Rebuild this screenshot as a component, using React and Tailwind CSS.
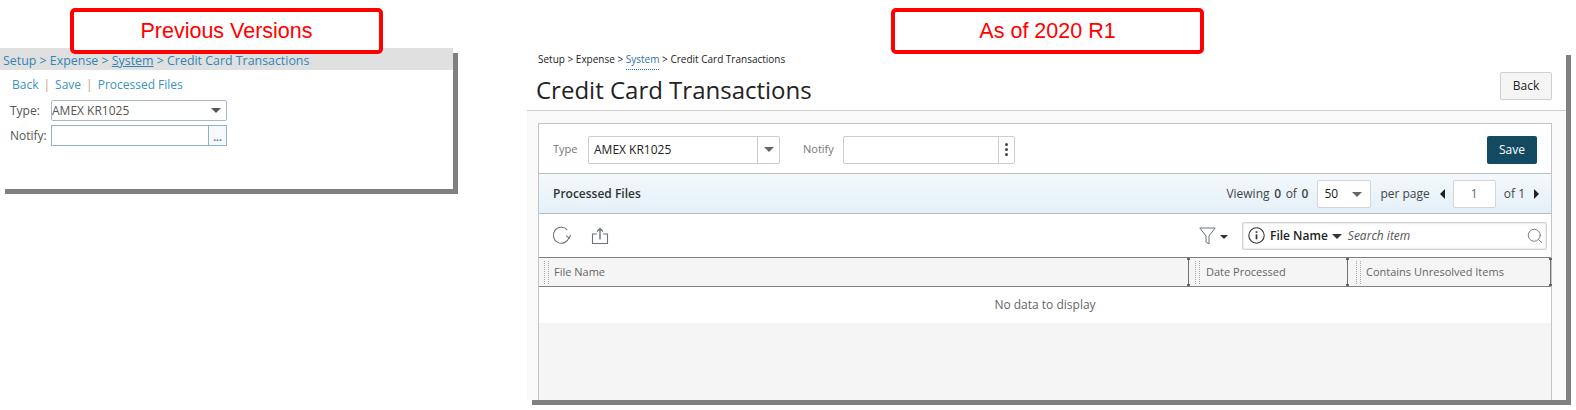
import React from 'react';
import { Search } from 'lucide-react';

const Caret = ({ className = 'border-t-[#666]' }) => (
  <span className={`inline-block w-0 h-0 border-x-[5px] border-x-transparent border-t-[5px] ${className}`} />
);

// Red annotation box sitting over the screenshots
function Callout({ className, children }) {
  return (
    <div className={`absolute top-2 z-10 w-[313px] h-[46px] border-[4px] border-[#ff0000] rounded-[5px] bg-white flex items-center justify-center text-[#ff0000] text-[21.5px] font-['Liberation_Sans',sans-serif] ${className}`}>
      {children}
    </div>
  );
}

function OldPanel() {
  const link = 'text-[#3a93c4]';
  return (
    <div className="w-[453px] h-[141px] bg-white shadow-[5px_5px_0_#808080] text-[12px]">
      <div className="h-[22px] bg-[#e0e0e0] pl-[3px] pt-[2px] text-[#2f86b5] text-[12.4px] font-medium leading-[22px] whitespace-pre">
        Setup &gt; Expense &gt; <span className="underline">System</span> &gt; Credit Card Transactions
      </div>
      <div className="flex items-center h-[22px] mt-1 pl-3 text-[#3a93c4] leading-[22px]">
        <span className={link}>Back</span>
        <span className="mx-[5px] text-[#c9a27c]">|</span>
        <span className={link}>Save</span>
        <span className="mx-[5px] text-[#c9a27c]">|</span>
        <span className={link}>Processed Files</span>
      </div>
      <div className="flex items-center mt-1 pl-[10px] text-[#555]">
        <span className="w-[41px]">Type:</span>
        <div className="w-[176px] h-[21px] border border-[#a9b8c4] rounded-[2px] flex items-center justify-between pr-[5px] text-[#555]">
          <span>AMEX KR1025</span>
          <Caret className="border-t-[#555]" />
        </div>
      </div>
      <div className="flex items-center mt-1 pl-[10px] text-[#555]">
        <span className="w-[41px]">Notify:</span>
        <div className="w-[176px] h-[21px] border border-[#8fb2cc] flex justify-end">
          <div className="w-[18px] border-l border-[#8fb2cc] bg-[#f7f9fb] text-[#2f7fb0] text-[10px] font-bold leading-[22px] text-center">...</div>
        </div>
      </div>
    </div>
  );
}

function RefreshIcon() {
  return (
    <svg width="19" height="19" viewBox="0 0 19 19" fill="none" stroke="#6b7280" strokeWidth="1.1">
      <path d="M15.2 3.8A8 8 0 1 0 17 11.6" />
      <path d="M14.2 9.6l2.9 2.5 1.7-3" />
    </svg>
  );
}

function ShareIcon() {
  return (
    <svg width="18" height="18" viewBox="0 0 18 18" fill="none" stroke="#6b7280" strokeWidth="1.1">
      <path d="M6 7H1.5v9.5h15V7H12" />
      <path d="M9 12.5V1.5M6 4.5l3-3 3 3" strokeWidth="1.4" />
    </svg>
  );
}

function FunnelIcon() {
  return (
    <svg width="17" height="18" viewBox="0 0 17 18" fill="none" stroke="#6b7280" strokeWidth="1">
      <path d="M.8 1h15.4L10 9v8l-3-2V9z" />
    </svg>
  );
}

function InfoIcon() {
  return (
    <svg width="17" height="17" viewBox="0 0 17 17" fill="none" stroke="#333" strokeWidth="1.1">
      <circle cx="8.5" cy="8.5" r="7.7" />
      <path d="M8.5 7.3v5" strokeWidth="1.7" />
      <path d="M8.5 4.2v1.7" strokeWidth="1.7" />
    </svg>
  );
}

function Grip() {
  return (
    <span className="w-[5px] h-[23px] shrink-0 border-x border-dotted border-[#a8a8a8]" />
  );
}

function HeaderCell({ className, labelClass, children }) {
  return (
    <div className={`relative h-full flex items-center ${className}`}>
      <Grip />
      <span className={`text-[#666] ${labelClass}`}>{children}</span>
      <span className="absolute right-0 top-0 bottom-0 w-[1px] bg-[#7a6a80]" />
      <span className="absolute -right-[1px] top-0 w-[3px] h-[2px] bg-[#666]" />
      <span className="absolute -right-[1px] bottom-0 w-[3px] h-[2px] bg-[#666]" />
    </div>
  );
}

function NewPanel() {
  return (
    <div className="w-[1039px] h-[350px] bg-white shadow-[5px_5px_0_#808080] flex flex-col text-[11px] text-[#333]">
      <div className="h-[61px] shrink-0 border-b border-[#cfcfcf] pl-[9px] pr-[14px] flex justify-between">
        <div>
          <div className="pt-[2px] pl-[2px] text-[10px] leading-[14px] text-[#222] whitespace-pre">
            Setup &gt; Expense &gt; <span className="text-[#2c6fae] border-b border-dotted border-[#1d72c9] pb-[3px]">System</span> &gt; Credit Card Transactions
          </div>
          <div className="mt-2 text-[24px] leading-[32px] text-[#222]">Credit Card Transactions</div>
        </div>
        <div className="mt-[22px] w-[52px] h-[28px] bg-[#f5f5f5] border border-[#d0d0d0] rounded-[2px] flex items-center justify-center text-[12px] text-[#222]">Back</div>
      </div>

      <div className="flex-1 min-h-0 bg-[#f9f9f9] pt-3 pl-[11px] pr-[14px]">
        <div className="h-full bg-[#f5f5f5] border-x border-t border-[#c4c4c4] flex flex-col">
          <div className="h-[49px] shrink-0 bg-white flex items-center pt-[2px] pl-[14px] pr-[14px]">
            <span className="w-[35px] text-[#777]">Type</span>
            <div className="w-[192px] h-[28px] border border-[#ccc] rounded-[2px] flex items-center">
              <span className="flex-1 pl-[5px] text-[12px] text-[#222]">AMEX KR1025</span>
              <span className="w-[22px] h-full border-l border-[#ccc] flex items-center justify-center"><Caret /></span>
            </div>
            <span className="ml-[23px] w-[40px] text-[#777]">Notify</span>
            <div className="w-[172px] h-[28px] border border-[#ccc] rounded-[2px] flex justify-end">
              <span className="w-4 h-full border-l border-[#ccc] flex flex-col items-center justify-center gap-[2px]">
                <i className="w-[3px] h-[3px] rounded-full bg-[#444]" />
                <i className="w-[3px] h-[3px] rounded-full bg-[#444]" />
                <i className="w-[3px] h-[3px] rounded-full bg-[#444]" />
              </span>
            </div>
            <div className="ml-auto w-[50px] h-[28px] bg-[#134a61] rounded-[2px] flex items-center justify-center text-white text-[12px]">Save</div>
          </div>

          <div className="h-[41px] shrink-0 bg-gradient-to-b from-[#f3f9fc] to-[#e4f0f8] border-y border-[#bdbdbd] flex items-center pt-[1px] pl-[14px] pr-[12px]">
            <span className="text-[12px] font-semibold text-[#333]">Processed Files</span>
            <div className="ml-auto flex items-center text-[12px] text-[#444]">
              <span className="[word-spacing:1.5px]">Viewing <b className="font-semibold">0</b> of <b className="font-semibold">0</b></span>
              <div className="ml-[9px] w-[54px] h-[28px] bg-white border border-[#d4d4d4] rounded-[2px] flex items-center justify-between pl-[6px] pr-[8px] text-[#222]">
                50 <Caret />
              </div>
              <span className="ml-[9px]">per page</span>
              <span className="ml-[10px] w-0 h-0 border-y-[5px] border-y-transparent border-r-[5px] border-r-[#222]" />
              <div className="ml-2 w-[43px] h-[28px] bg-white border border-[#d4d4d4] rounded-[2px] flex items-center justify-center text-[#666]">1</div>
              <span className="ml-2">of 1</span>
              <span className="ml-[9px] w-0 h-0 border-y-[5px] border-y-transparent border-l-[5px] border-l-[#222]" />
            </div>
          </div>

          <div className="h-[43px] shrink-0 bg-white flex items-center pl-[13px] pr-[4px]">
            <RefreshIcon />
            <span className="ml-5"><ShareIcon /></span>
            <span className="ml-auto"><FunnelIcon /></span>
            <span className="ml-1"><Caret className="border-t-[#333] !border-x-[4px] !border-t-[4px]" /></span>
            <div className="ml-[14px] w-[305px] h-[28px] bg-white border border-[#d4d4d4] rounded-[2px] shadow-[inset_0_0_2px_#bbb] flex items-center pl-[5px] pr-[2px]">
              <InfoIcon />
              <span className="ml-[5px] text-[12px] font-semibold text-[#222]">File Name</span>
              <span className="ml-1"><Caret className="border-t-[#333]" /></span>
              <span className="ml-[6px] text-[12px] italic text-[#555]">Search item</span>
              <Search className="ml-auto w-[18px] h-[18px] text-[#666]" strokeWidth={1.1} />
            </div>
          </div>

          <div className="h-[30px] shrink-0 bg-[#f5f5f5] border-y border-[#808080] flex items-center">
            <HeaderCell className="w-[650px] pl-[5px]" labelClass="ml-[5px]">File Name</HeaderCell>
            <HeaderCell className="w-[159px] pl-[6px]" labelClass="ml-[6px]">Date Processed</HeaderCell>
            <HeaderCell className="flex-1 pl-2" labelClass="ml-[5px]">Contains Unresolved Items</HeaderCell>
          </div>

          <div className="h-[36px] shrink-0 bg-white flex items-center justify-center text-[12px] text-[#666]">No data to display</div>
        </div>
      </div>
    </div>
  );
}

export default function App() {
  return (
    <div className="w-[1576px] h-[410px] bg-white flex font-['Open_Sans',sans-serif] overflow-hidden">
      <div className="relative w-[527px] shrink-0 pt-12">
        <Callout className="left-[70px]">Previous Versions</Callout>
        <OldPanel />
      </div>
      <div className="relative flex-1 pt-[50px]">
        <Callout className="left-[364px]">As of 2020 R1</Callout>
        <NewPanel />
      </div>
    </div>
  );
}
